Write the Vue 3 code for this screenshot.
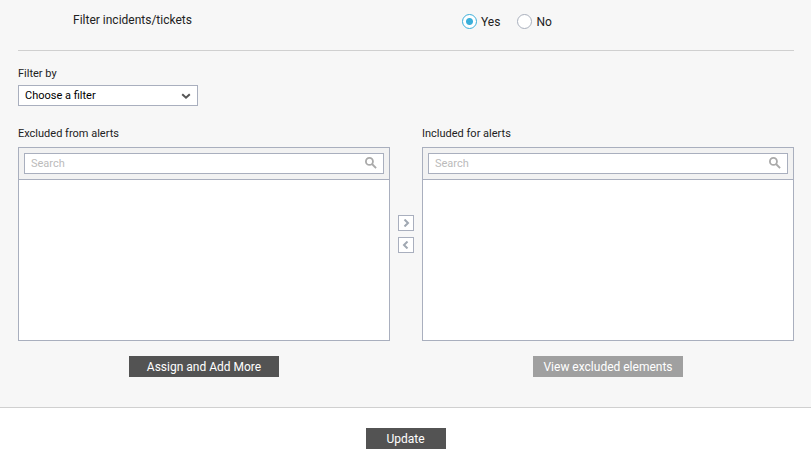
<template>
  <form class="alert-form" @submit.prevent>
    <div class="form-body">
      <div class="question" role="radiogroup" aria-labelledby="filter-question">
        <span id="filter-question" class="question-text">Filter incidents/tickets</span>
        <div class="radio-group">
          <label v-for="option in options" :key="option" class="radio">
            <input v-model="filterTickets" type="radio" name="filter-tickets" :value="option" />
            <span class="radio-text">{{ option }}</span>
          </label>
        </div>
      </div>

      <div class="filter">
        <label for="filter-by" class="field-label">Filter by</label>
        <div class="select-wrapper">
          <select id="filter-by" v-model="filterBy">
            <option value="">Choose a filter</option>
          </select>
          <svg class="chevron" viewBox="0 0 10 7" aria-hidden="true">
            <path d="M1.2 1.2 L5 4.7 L8.8 1.2" />
          </svg>
        </div>
      </div>

      <div class="transfer">
        <template v-for="(list, index) in lists" :key="list.id">
          <div v-if="index === 1" class="arrows">
            <button type="button" class="arrow" aria-label="Include">
              <svg viewBox="0 0 8 8" aria-hidden="true"><path d="M2.5 0.5 L6 4 L2.5 7.5" /></svg>
            </button>
            <button type="button" class="arrow" aria-label="Exclude">
              <svg viewBox="0 0 8 8" aria-hidden="true"><path d="M5.5 0.5 L2 4 L5.5 7.5" /></svg>
            </button>
          </div>
          <div class="column">
            <label :for="list.id" class="field-label">{{ list.label }}</label>
            <div class="list-box">
              <div class="list-search">
                <div class="search-field">
                  <input :id="list.id" v-model="list.search" type="text" placeholder="Search" />
                  <svg class="magnifier" viewBox="0 0 13 13" aria-hidden="true">
                    <circle cx="4.8" cy="4.8" r="3.8" />
                    <path d="M7.6 7.6 L12 12" />
                  </svg>
                </div>
              </div>
              <div class="list-items"></div>
            </div>
          </div>
        </template>
      </div>

      <div class="list-actions">
        <div class="list-action">
          <button type="button" class="btn">Assign and Add More</button>
        </div>
        <div class="list-action">
          <button type="button" class="btn" disabled>View excluded elements</button>
        </div>
      </div>
    </div>

    <div class="form-footer">
      <button type="submit" class="btn btn-small">Update</button>
    </div>
  </form>
</template>

<script setup>
import { ref } from 'vue';

const options = ['Yes', 'No'];
const filterTickets = ref('Yes');
const filterBy = ref('');
const lists = ref([
  { id: 'excluded-search', label: 'Excluded from alerts', search: '' },
  { id: 'included-search', label: 'Included for alerts', search: '' }
]);
</script>

<style>
body {
  margin: 0;
  background: #fff;
}
</style>

<style scoped>
.alert-form,
.alert-form input,
.alert-form select,
.alert-form button {
  box-sizing: border-box;
  font-family: Roboto, "Liberation Sans", sans-serif;
}

.alert-form {
  color: #222;
  font-size: 11px;
  line-height: 14px;
}

.form-body {
  padding: 0 17px 30px 18px;
  background: #f7f7f7;
  border-bottom: 1px solid #d0d0d0;
}

.question {
  display: grid;
  grid-template-columns: 1fr 1fr;
  padding: 12px 0 19px;
  border-bottom: 1px solid #d0d0d0;
  font-size: 12px;
  line-height: 17px;
}

.question-text {
  padding-left: 55px;
}

.radio-group {
  display: flex;
  gap: 17px;
  padding-left: 56px;
}

.radio {
  display: flex;
  align-items: center;
  gap: 4px;
}

.radio-text {
  padding-top: 2px;
}

.radio input {
  appearance: none;
  width: 15px;
  height: 15px;
  margin: 0;
  border: 1px solid #a9b0bd;
  border-radius: 50%;
  background: #fff;
}

.radio input:checked {
  border-color: #3bafda;
  background: radial-gradient(circle, #3bafda 3px, #fff 4px);
}

.filter {
  padding-top: 16px;
}

.field-label {
  display: block;
  margin-bottom: 6px;
}

.filter .field-label {
  margin-bottom: 4px;
}

.select-wrapper {
  position: relative;
  width: 180px;
}

.select-wrapper select {
  appearance: none;
  display: block;
  width: 100%;
  height: 21px;
  margin: 0;
  padding: 0 24px 0 6px;
  border: 1px solid #a9afbe;
  border-radius: 0;
  background: #fff;
  color: #000;
  font-size: 11px;
}

.chevron {
  position: absolute;
  top: 8px;
  right: 7px;
  width: 10px;
  height: 7px;
  fill: none;
  stroke: #555;
  stroke-width: 2;
  pointer-events: none;
}

.transfer {
  display: flex;
  align-items: center;
  gap: 8px;
  padding-top: 21px;
}

.column {
  flex: 1;
  min-width: 0;
}

.list-box {
  border: 1px solid #a9afbe;
  background: #fff;
}

.list-search {
  padding: 5px;
  border-bottom: 1px solid #a9afbe;
  background: #f2f2f2;
}

.search-field {
  position: relative;
}

.search-field input {
  display: block;
  width: 100%;
  height: 21px;
  margin: 0;
  padding: 0 28px 0 6px;
  border: 1px solid #a9afbe;
  border-radius: 0;
  background: #fff;
  font-size: 11px;
}

.search-field input::placeholder {
  color: #bbb;
}

.magnifier {
  position: absolute;
  top: 4px;
  right: 7px;
  width: 12px;
  height: 12px;
  fill: none;
  stroke: #aaa;
  stroke-width: 2;
}

.list-items {
  height: 160px;
}

.arrows {
  display: flex;
  flex-direction: column;
  gap: 6px;
}

.arrow {
  display: flex;
  align-items: center;
  justify-content: center;
  width: 16px;
  height: 16px;
  padding: 0;
  border: 1px solid #a9afbe;
  border-radius: 0;
  background: #fff;
}

.arrow svg {
  width: 8px;
  height: 8px;
  fill: none;
  stroke: #a0a8b2;
  stroke-width: 2;
}

.list-actions {
  display: flex;
  gap: 32px;
  padding-top: 15px;
}

.list-action {
  display: flex;
  flex: 1;
  justify-content: center;
}

.btn {
  width: 150px;
  height: 21px;
  padding: 2px 0 0;
  border: 0;
  border-radius: 0;
  background: #535353;
  color: #fff;
  font-size: 12px;
  line-height: 17px;
}

.btn:disabled {
  background: #a0a0a0;
}

.btn-small {
  width: 80px;
}

.form-footer {
  display: flex;
  justify-content: center;
  padding: 20px 0 11px;
  background: #fff;
}
</style>
